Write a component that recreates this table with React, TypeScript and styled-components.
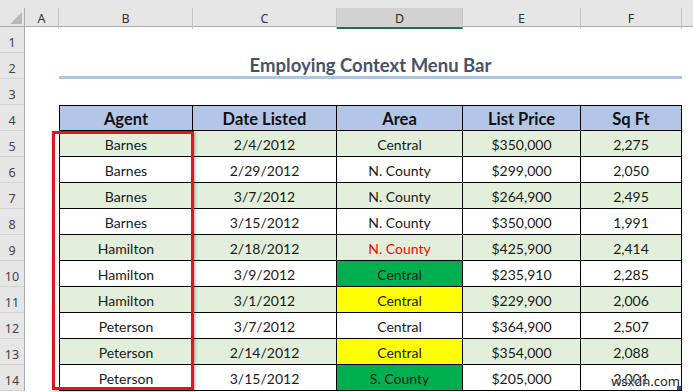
import React from "react";
import styled, { createGlobalStyle } from "styled-components";

const GlobalStyle = createGlobalStyle`
  html, body { margin: 0; padding: 0; background: #ffffff; }
  body { font-family: Lato, "Noto Sans", sans-serif; }
  * { box-sizing: border-box; }
`;

const COLUMN_TEMPLATE = "25px 34px 134px 144px 126px 118px 101px 1fr";

const Page = styled.div`
  width: 693px;
  height: 392px;
  overflow: hidden;
  background: #ffffff;
  position: relative;
`;

const TopStrip = styled.div`
  height: 8px;
  background: #e6e6e6;
`;

const ColHeaderRow = styled.div`
  display: grid;
  grid-template-columns: ${COLUMN_TEMPLATE};
  height: 19px;
  background: #e6e6e6;
  border-bottom: 1px solid #ababab;
`;

const Corner = styled.div`
  position: relative;
  border-right: 1px solid #ababab;
`;

const CornerTriangle = styled.span`
  position: absolute;
  left: 10px;
  top: 4px;
  width: 12px;
  height: 12px;
  background: #b9b9b9;
  clip-path: polygon(100% 0, 100% 100%, 0 100%);
`;

const ColHeader = styled.div<{ $selected?: boolean; $last?: boolean }>`
  display: flex;
  align-items: center;
  justify-content: center;
  font-family: "Noto Sans", "Open Sans", sans-serif;
  font-size: 12.5px;
  color: ${(p) => (p.$selected ? "#2b2b2b" : "#333333")};
  background: ${(p) => (p.$selected ? "#d2d2d2" : "transparent")};
  border-right: ${(p) => (p.$last ? "none" : "1px solid #c3c3c3")};
  border-bottom: ${(p) => (p.$selected ? "2px solid #217346" : "none")};
  padding-top: ${(p) => (p.$selected ? "2px" : "0")};
`;

const Body = styled.div`
  display: flex;
`;

const RowHeaderCol = styled.div`
  width: 25px;
  flex: none;
  background: #e6e6e6;
  border-right: 1px solid #ababab;
`;

const RowNum = styled.div`
  height: 26px;
  display: flex;
  align-items: center;
  justify-content: center;
  padding-top: 5px;
  font-family: "Noto Sans", "Open Sans", sans-serif;
  font-size: 12.5px;
  color: #444444;
  border-bottom: 1px solid #d4d4d4;
`;

const Sheet = styled.div`
  flex: 1;
  padding-left: 34px;
`;

const Spacer = styled.div`
  height: 26px;
`;

const TitleRow = styled.div`
  width: 623px;
  height: 26px;
  display: flex;
  align-items: center;
  justify-content: center;
  border-bottom: 3px solid #adc5df;
  padding-top: 1px;
  font-family: Lato, "Noto Sans", sans-serif;
  font-weight: 700;
  font-size: 18.5px;
  color: #44546a;
`;

const TableWrap = styled.div`
  position: relative;
  width: 623px;
`;

const Table = styled.div`
  display: grid;
  grid-template-columns: 133px 144px 126px 118px 101px;
  grid-template-rows: 25px repeat(10, 26px);
  border-left: 1px solid #000000;
  border-top: 1px solid #000000;
`;

const HeaderCell = styled.div`
  display: flex;
  align-items: center;
  justify-content: center;
  background: #b4c6e7;
  border-right: 1px solid #000000;
  border-bottom: 1px solid #000000;
  font-weight: 700;
  font-size: 16.5px;
  color: #111111;
  padding-top: 1px;
`;

const Cell = styled.div<{ $bg: string; $color?: string }>`
  display: flex;
  align-items: center;
  justify-content: center;
  background: ${(p) => p.$bg};
  color: ${(p) => p.$color ?? "#1a1a1a"};
  border-right: 1px solid #000000;
  border-bottom: 1px solid #000000;
  font-size: 14px;
  padding-top: 2px;
`;

const SelectionBox = styled.div`
  position: absolute;
  left: -7px;
  top: 26px;
  width: 142px;
  height: 259px;
  border: 3px solid #e0161c;
  box-shadow: 1px 1px 3px rgba(0, 0, 0, 0.35);
  pointer-events: none;
`;

const Watermark = styled.div`
  position: absolute;
  right: 13px;
  bottom: 2px;
  font-family: "Noto Sans", "DejaVu Sans", sans-serif;
  font-size: 13px;
  color: #1e1e1e;
  text-shadow: 0 0 2px #ffffff, 0 0 2px #ffffff;
`;

const HandleSquare = styled.div`
  position: absolute;
  left: 677px;
  top: 386px;
  width: 4px;
  height: 4px;
  background: #3b4b8f;
`;

type Row = {
  agent: string;
  date: string;
  area: string;
  price: string;
  sqft: string;
  areaBg?: string;
  areaColor?: string;
};

const GREEN_STRIPE = "#e2efda";

const rows: Row[] = [
  { agent: "Barnes", date: "2/4/2012", area: "Central", price: "$350,000", sqft: "2,275" },
  { agent: "Barnes", date: "2/29/2012", area: "N. County", price: "$299,000", sqft: "2,050" },
  { agent: "Barnes", date: "3/7/2012", area: "N. County", price: "$264,900", sqft: "2,495" },
  { agent: "Barnes", date: "3/15/2012", area: "N. County", price: "$350,000", sqft: "1,991" },
  { agent: "Hamilton", date: "2/18/2012", area: "N. County", price: "$425,900", sqft: "2,414", areaColor: "#ff0000" },
  { agent: "Hamilton", date: "3/9/2012", area: "Central", price: "$235,910", sqft: "2,285", areaBg: "#00b050" },
  { agent: "Hamilton", date: "3/1/2012", area: "Central", price: "$229,900", sqft: "2,006", areaBg: "#ffff00" },
  { agent: "Peterson", date: "3/7/2012", area: "Central", price: "$364,900", sqft: "2,507" },
  { agent: "Peterson", date: "2/14/2012", area: "Central", price: "$354,000", sqft: "2,088", areaBg: "#ffff00" },
  { agent: "Peterson", date: "3/15/2012", area: "S. County", price: "$205,000", sqft: "2,001", areaBg: "#00b050" },
];

const columns = ["A", "B", "C", "D", "E", "F"];
const headers = ["Agent", "Date Listed", "Area", "List Price", "Sq Ft"];

export default function App() {
  return (
    <>
      <GlobalStyle />
      <Page>
        <TopStrip />
        <ColHeaderRow>
          <Corner>
            <CornerTriangle />
          </Corner>
          {columns.map((c) => (
            <ColHeader key={c} $selected={c === "D"}>
              {c}
            </ColHeader>
          ))}
          <ColHeader $last />
        </ColHeaderRow>
        <Body>
          <RowHeaderCol>
            {Array.from({ length: 14 }, (_, i) => (
              <RowNum key={i}>{i + 1}</RowNum>
            ))}
          </RowHeaderCol>
          <Sheet>
            <Spacer />
            <TitleRow>Employing Context Menu Bar</TitleRow>
            <Spacer />
            <TableWrap>
              <Table>
                {headers.map((h) => (
                  <HeaderCell key={h}>{h}</HeaderCell>
                ))}
                {rows.map((r, i) => {
                  const bg = i % 2 === 0 ? GREEN_STRIPE : "#ffffff";
                  return (
                    <React.Fragment key={i}>
                      <Cell $bg={bg}>{r.agent}</Cell>
                      <Cell $bg={bg}>{r.date}</Cell>
                      <Cell $bg={r.areaBg ?? bg} $color={r.areaColor}>
                        {r.area}
                      </Cell>
                      <Cell $bg={bg}>{r.price}</Cell>
                      <Cell $bg={bg}>{r.sqft}</Cell>
                    </React.Fragment>
                  );
                })}
              </Table>
              <SelectionBox />
            </TableWrap>
          </Sheet>
        </Body>
        <Watermark>wsxdn.com</Watermark>
        <HandleSquare />
      </Page>
    </>
  );
}
